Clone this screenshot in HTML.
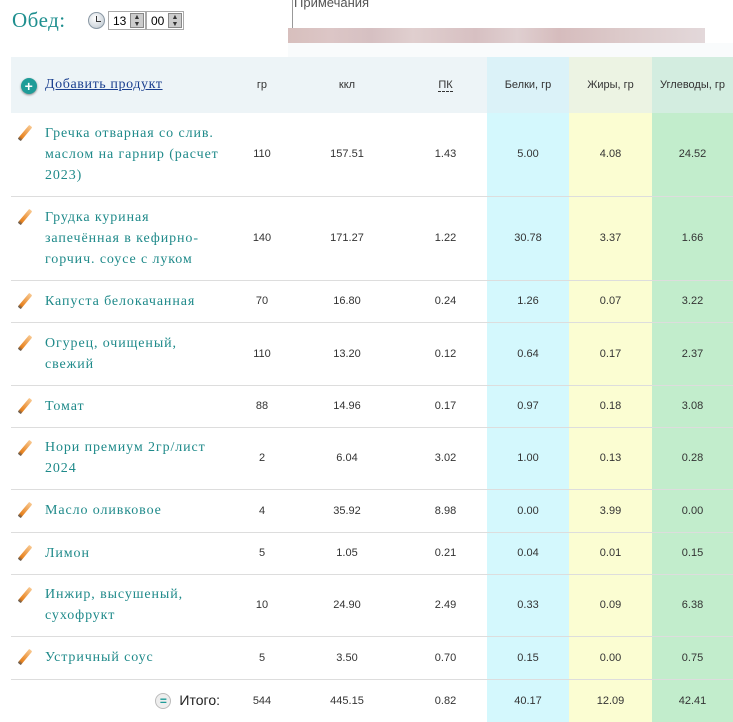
<!DOCTYPE html>
<html><head><meta charset="utf-8"><style>
*{margin:0;padding:0;box-sizing:border-box}
body{width:733px;height:722px;overflow:hidden;background:#fff;position:relative;font-family:"Liberation Sans",sans-serif}
.obed{position:absolute;left:12px;top:8px;font:21px "Liberation Serif",serif;color:#1f8f8f;letter-spacing:0.5px}
.clock{position:absolute;left:88px;top:12px;width:17px;height:17px;border-radius:50%;background:radial-gradient(circle at 40% 35%,#fff,#cfd6dc 70%,#9aa6b0);border:1px solid #8a98a4}
.clock:before{content:"";position:absolute;left:7px;top:3px;width:1px;height:6px;background:#333}
.clock:after{content:"";position:absolute;left:7px;top:8px;width:5px;height:1px;background:#333}
.inp{position:absolute;top:11px;height:19px;border:1px solid #aaa;font-size:12px;padding:2px 0 0 4px;color:#000}
.spin{position:absolute;right:1px;top:1px;width:14px;height:15px;background:#ccc;border:1px solid #888;font-size:7px;line-height:7px;text-align:center;color:#333}
.note{position:absolute;left:292px;top:-5px;font-size:13px;color:#555;border-left:1px solid #999;padding-left:1px;height:33px}
.pink{position:absolute;left:288px;top:28px;width:417px;height:15px;background:linear-gradient(90deg,#d7bfbd,#dcc6c6 10%,#d6c0c2 20%,#e0cfcf 30%,#d7c0c2 45%,#dfcfd0 55%,#d6bcbd 65%,#dccaca 80%,#e3d8da)}
.light{position:absolute;left:288px;top:43px;width:445px;height:14px;background:#f9fbfc}
table{position:absolute;left:11px;top:57px;border-collapse:collapse;table-layout:fixed;width:722px}
td{font-size:11px;color:#333;text-align:center;vertical-align:middle;border-bottom:1px solid #ddd}
thead td{height:56px;background:#edf4f7;border:none;font-size:11px;color:#333}
thead td.b{background:#dbf2f8}thead td.j{background:#ecf3e3}thead td.u{background:#d3ede0}
td.b{background:#d4f8fd}td.j{background:#fbfdd2}td.u{background:#c2edcc}
td.n{text-align:left;padding-left:34px;font:14px/21px "Liberation Serif",serif;letter-spacing:0.9px;color:#1f8a8a;position:relative}
.pen{position:absolute;left:12px;width:4px;height:18px;background:linear-gradient(#f8c890,#e8821e 80%,#555);transform:rotate(40deg);border-radius:1px}
.add{position:relative;text-align:left;padding-left:34px;font:14px "Liberation Serif",serif;letter-spacing:0.6px;color:#1a3f8f;text-decoration:underline}
.plus{position:absolute;left:10px;top:21px;width:16px;height:16px;border-radius:50%;background:#1f9c98;color:#fff;font:bold 14px/16px "Liberation Sans";text-align:center;box-shadow:0 1px 2px #888}
tr.tot td{border:none;height:43px}
.eq{display:inline-block;width:16px;height:16px;border-radius:50%;background:#eee;border:1px solid #bbb;color:#1f9c98;font:bold 12px/14px "Liberation Sans";text-align:center;margin-right:8px;vertical-align:middle}
</style></head><body>
<div class="obed">Обед:</div>
<div class="clock"></div>
<div class="inp" style="left:108px;width:38px">13<div class="spin">▲<br>▼</div></div>
<div class="inp" style="left:146px;width:38px">00<div class="spin">▲<br>▼</div></div>
<div class="note">Примечания</div>
<div class="pink"></div><div class="light"></div>
<table>
<colgroup><col style="width:209px"><col style="width:84px"><col style="width:86px"><col style="width:97px"><col style="width:82px"><col style="width:83px"><col style="width:81px"></colgroup>
<thead><tr><td class="add"><span class="plus">+</span>Добавить продукт</td><td>гр</td><td>ккл</td><td style="padding-left:14px"><span style="border-bottom:1px dashed #333">ПК</span></td><td class="b">Белки, гр</td><td class="j">Жиры, гр</td><td class="u">Углеводы, гр</td></tr></thead>
<tbody>
<tr style="height:83px"><td class="n"><span class="pen" style="top:11px"></span>Гречка отварная со слив. маслом на гарнир (расчет 2023)</td><td>110</td><td>157.51</td><td style="padding-left:14px">1.43</td><td class="b">5.00</td><td class="j">4.08</td><td class="u">24.52</td></tr>
<tr style="height:84px"><td class="n"><span class="pen" style="top:11px"></span>Грудка куриная запечённая в кефирно-горчич. соусе с луком</td><td>140</td><td>171.27</td><td style="padding-left:14px">1.22</td><td class="b">30.78</td><td class="j">3.37</td><td class="u">1.66</td></tr>
<tr style="height:42px"><td class="n"><span class="pen" style="top:11px"></span>Капуста белокачанная</td><td>70</td><td>16.80</td><td style="padding-left:14px">0.24</td><td class="b">1.26</td><td class="j">0.07</td><td class="u">3.22</td></tr>
<tr style="height:63px"><td class="n"><span class="pen" style="top:11px"></span>Огурец, очищеный, свежий</td><td>110</td><td>13.20</td><td style="padding-left:14px">0.12</td><td class="b">0.64</td><td class="j">0.17</td><td class="u">2.37</td></tr>
<tr style="height:42px"><td class="n"><span class="pen" style="top:11px"></span>Томат</td><td>88</td><td>14.96</td><td style="padding-left:14px">0.17</td><td class="b">0.97</td><td class="j">0.18</td><td class="u">3.08</td></tr>
<tr style="height:62px"><td class="n"><span class="pen" style="top:11px"></span>Нори премиум 2гр/лист 2024</td><td>2</td><td>6.04</td><td style="padding-left:14px">3.02</td><td class="b">1.00</td><td class="j">0.13</td><td class="u">0.28</td></tr>
<tr style="height:43px"><td class="n"><span class="pen" style="top:11px"></span>Масло оливковое</td><td>4</td><td>35.92</td><td style="padding-left:14px">8.98</td><td class="b">0.00</td><td class="j">3.99</td><td class="u">0.00</td></tr>
<tr style="height:42px"><td class="n"><span class="pen" style="top:11px"></span>Лимон</td><td>5</td><td>1.05</td><td style="padding-left:14px">0.21</td><td class="b">0.04</td><td class="j">0.01</td><td class="u">0.15</td></tr>
<tr style="height:62px"><td class="n"><span class="pen" style="top:11px"></span>Инжир, высушеный, сухофрукт</td><td>10</td><td>24.90</td><td style="padding-left:14px">2.49</td><td class="b">0.33</td><td class="j">0.09</td><td class="u">6.38</td></tr>
<tr style="height:43px"><td class="n"><span class="pen" style="top:11px"></span>Устричный соус</td><td>5</td><td>3.50</td><td style="padding-left:14px">0.70</td><td class="b">0.15</td><td class="j">0.00</td><td class="u">0.75</td></tr>
<tr class="tot"><td style="text-align:right;padding-right:0;font-size:14px;color:#222"><span class="eq">=</span>Итого:</td><td>544</td><td>445.15</td><td style="padding-left:14px">0.82</td><td class="b">40.17</td><td class="j">12.09</td><td class="u">42.41</td></tr>
</tbody></table>
</body></html>
